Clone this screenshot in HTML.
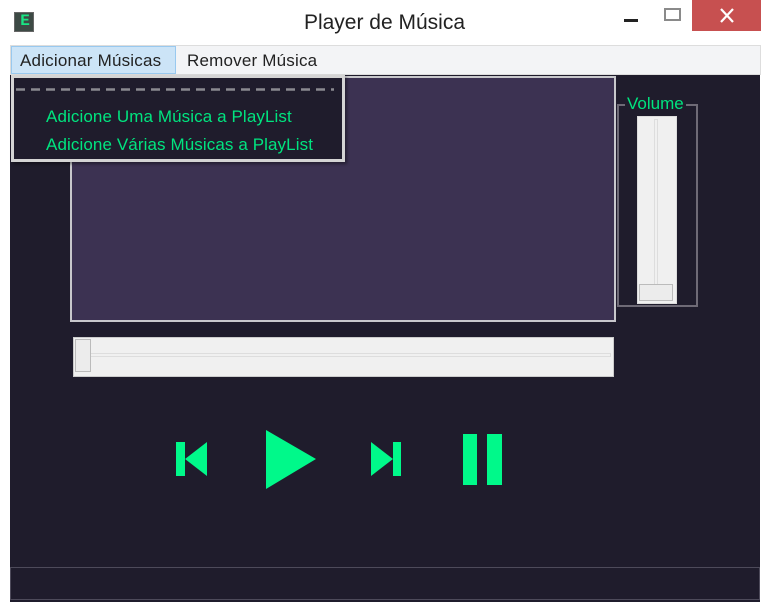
<!DOCTYPE html>
<html><head><meta charset="utf-8"><style>
body{margin:0;width:769px;height:608px;background:#fff;position:relative;overflow:hidden;font-family:"Liberation Sans","DejaVu Sans",sans-serif}
div{position:absolute;box-sizing:border-box}
.g{color:#00e47f}
</style></head><body>
<div style="left:14px;top:12px;width:20px;height:20px;background:#3d4a45;border:1px solid #666"></div>
<div style="left:18px;top:10px;width:14px;height:20px;color:#19e684;font:bold 16px 'Liberation Mono',monospace;line-height:22px;text-align:center">E</div>
<div style="left:0;top:11px;width:769px;text-align:center;font-size:21px;color:#222">Player de Música</div>
<div style="left:624px;top:19px;width:14px;height:3px;background:#222"></div>
<div style="left:664px;top:8px;width:17px;height:13px;border:2px solid #8a8a8a"></div>
<div style="left:692px;top:0;width:69px;height:31px;background:#c75050"></div>
<svg style="position:absolute;left:719px;top:8px" width="16" height="15"><path d="M2 1L14 14M14 1L2 14" stroke="#fff" stroke-width="2.2"/></svg>
<div style="left:10px;top:45px;width:751px;height:30px;background:#f3f4f6;border:1px solid #ddd"></div>
<div style="left:11px;top:46px;width:165px;height:28px;background:#cce4f7;border:1px solid #99c9ef"></div>
<div style="left:20px;top:51px;font-size:17px;color:#222;letter-spacing:.2px">Adicionar Músicas</div>
<div style="left:187px;top:51px;font-size:17px;color:#222;letter-spacing:.2px">Remover Música</div>
<div style="left:10px;top:75px;width:750px;height:527px;background:#1f1c2c"></div>
<div style="left:70px;top:76px;width:546px;height:246px;background:#3c3252;border:2px solid #c8c8cc"></div>
<div style="left:617px;top:104px;width:81px;height:203px;border:2px solid #6e6a76"></div>
<div style="left:625px;top:94px;padding:0 2px;background:#1f1c2c;font-size:17px" class="g">Volume</div>
<div style="left:637px;top:116px;width:40px;height:188px;background:#f0f0f0;border:1px solid #ddd"></div>
<div style="left:654px;top:119px;width:4px;height:182px;border:1px solid #ddd"></div>
<div style="left:639px;top:284px;width:34px;height:17px;background:#ececec;border:1px solid #bbb"></div>
<div style="left:73px;top:337px;width:541px;height:40px;background:#f0f0f0;border:1px solid #ccc"></div>
<div style="left:88px;top:353px;width:523px;height:4px;border:1px solid #ddd"></div>
<div style="left:75px;top:339px;width:16px;height:33px;background:#ececec;border:1px solid #bbb"></div>
<svg style="position:absolute;left:0;top:0" width="769" height="608" fill="#00f98a">
<rect x="176" y="442" width="9" height="34"/><polygon points="185,459 207,442 207,476"/>
<polygon points="266,430 316,459 266,489"/>
<polygon points="371,442 393,459 371,476"/><rect x="393" y="442" width="8" height="34"/>
<rect x="463" y="434" width="14" height="51"/><rect x="487" y="434" width="15" height="51"/>
</svg>
<div style="left:10px;top:567px;width:750px;height:33px;border:1px solid #4d4a5a"></div>
<div style="left:11px;top:75px;width:334px;height:87px;background:#1f1c2c;border:3px solid #d4d4d4;box-shadow:2px 2px 3px rgba(0,0,0,.4)"></div>
<svg style="position:absolute;left:16px;top:88px" width="318" height="3"><line x1="0" y1="1.5" x2="318" y2="1.5" stroke="#8a8a90" stroke-width="2.5" stroke-dasharray="9,6"/></svg>
<div style="left:46px;top:107px;font-size:17px;letter-spacing:.1px" class="g">Adicione Uma Música a PlayList</div>
<div style="left:46px;top:135px;font-size:17px;letter-spacing:.1px" class="g">Adicione Várias Músicas a PlayList</div>
</body></html>
